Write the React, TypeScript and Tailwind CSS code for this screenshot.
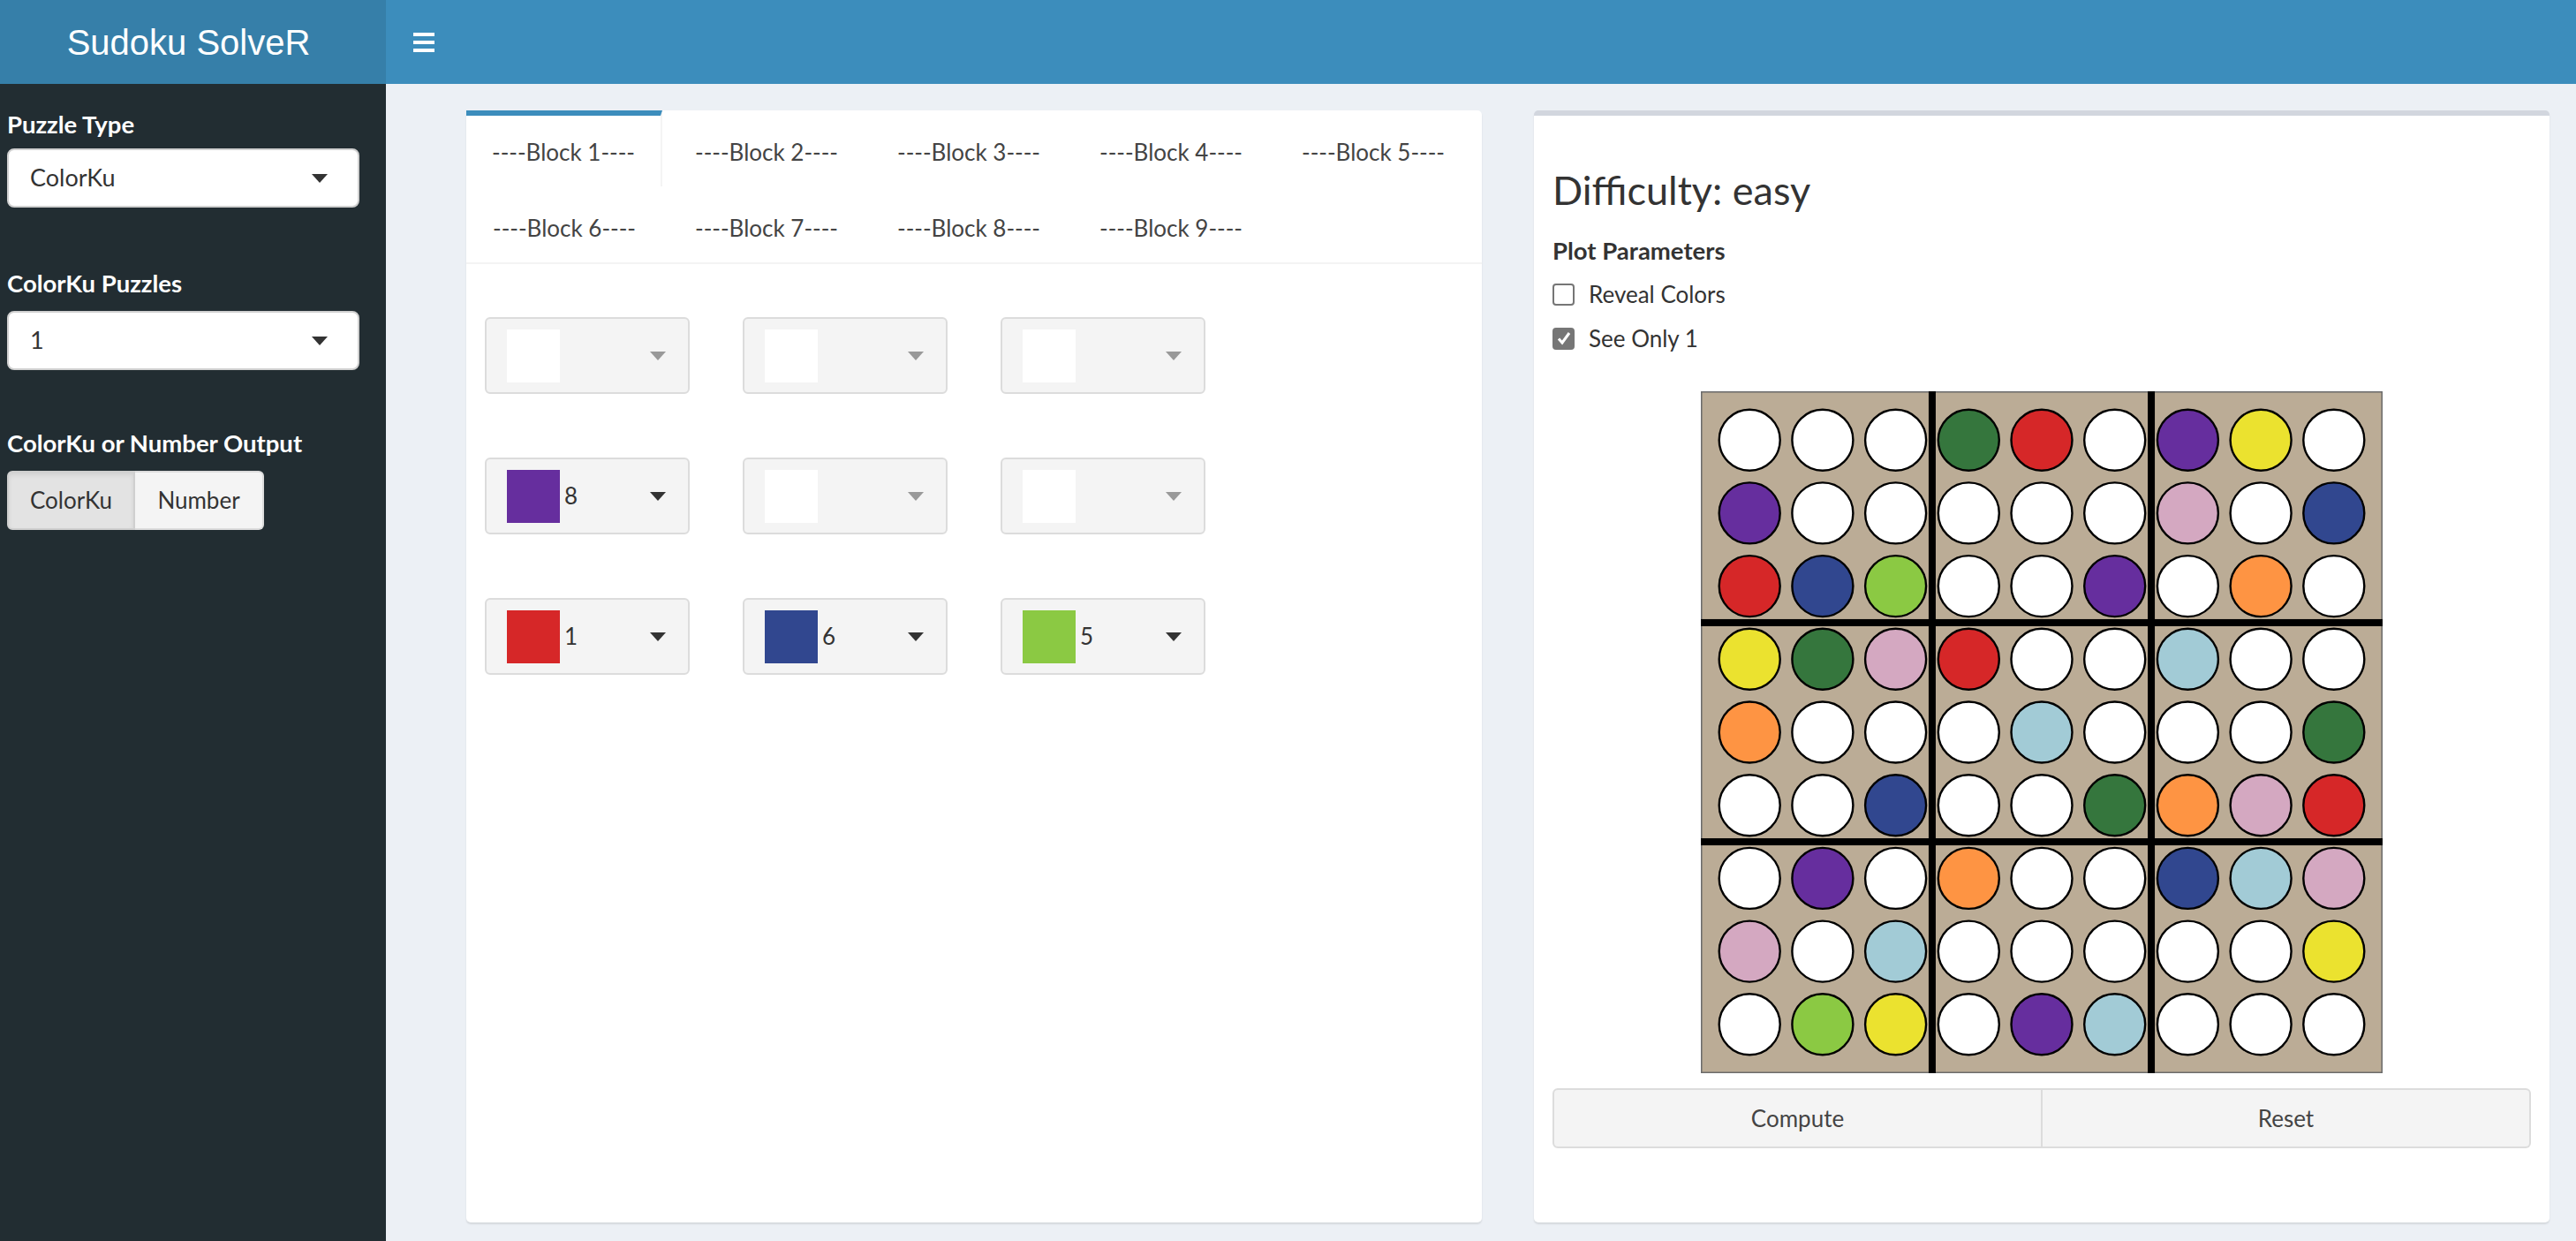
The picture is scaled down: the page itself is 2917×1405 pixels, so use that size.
import React from "react";

const COLORS: Record<string, string> = {
  W: "#ffffff",
  G: "#35763d",
  R: "#d62728",
  P: "#662e9e",
  Y: "#ebe22f",
  K: "#d4a8c1",
  N: "#31478f",
  L: "#8bc943",
  O: "#fe9443",
  B: "#a2cbd6",
};

const BOARD = [
  "WWWGRWPYW",
  "PWWWWWKWN",
  "RNLWWPWOW",
  "YGKRWWBWW",
  "OWWWBWWWG",
  "WWNWWGOKR",
  "WPWOWWNBK",
  "KWBWWWWWY",
  "WLYWPBWWW",
];

const BLOCK_CELLS: ({ c: string; n: number } | null)[][] = [
  [null, null, null],
  [{ c: "#662e9e", n: 8 }, null, null],
  [
    { c: "#d62728", n: 1 },
    { c: "#31478f", n: 6 },
    { c: "#8bc943", n: 5 },
  ],
];

const Caret = ({ color }: { color: string }) => (
  <svg width="18" height="10" viewBox="0 0 18 10">
    <polygon points="0,0 18,0 9,10" fill={color} />
  </svg>
);

const SidebarSelect = ({ value }: { value: string }) => (
  <div className="h-[67px] w-[399px] bg-white rounded-[8px] border-2 border-[#d0d0d0] flex items-center pl-[24px] pr-[34px]">
    <span className="text-[27px] text-[#333]">{value}</span>
    <span className="ml-auto flex">
      <Caret color="#333" />
    </span>
  </div>
);

const CellSelect = ({ cell }: { cell: { c: string; n: number } | null }) => (
  <div className="w-[232px] h-[87px] bg-[#f4f4f4] border-2 border-[#dcdcdc] rounded-[6px] flex items-center pl-[23px] pr-[25px]">
    <div
      className="w-[60px] h-[60px]"
      style={{ background: cell ? cell.c : "#ffffff" }}
    />
    <span className="ml-[5px] text-[26px] text-[#333]">{cell ? cell.n : ""}</span>
    <span className="ml-auto flex">
      <Caret color={cell ? "#333" : "#999"} />
    </span>
  </div>
);

const Board = () => {
  const step = 82.7;
  const off = 55.2;
  return (
    <svg width="772" height="772" viewBox="0 0 772 772">
      <rect x="0.75" y="0.75" width="770.5" height="770.5" fill="#bbac96" stroke="#6b6b6b" strokeWidth="1.5" />
      {[2.5, 5.5].map((k) => (
        <g key={k}>
          <rect x={off + k * step - 4} y="0" width="8" height="772" fill="#000" />
          <rect x="0" y={off + k * step - 4} width="772" height="8" fill="#000" />
        </g>
      ))}
      {BOARD.map((row, r) =>
        row.split("").map((ch, c) => (
          <circle
            key={`${r}-${c}`}
            cx={off + c * step}
            cy={off + r * step}
            r="34.5"
            fill={COLORS[ch]}
            stroke="#000"
            strokeWidth="2.4"
          />
        ))
      )}
    </svg>
  );
};

const Checkbox = ({ checked }: { checked?: boolean }) =>
  checked ? (
    <div className="w-[25px] h-[25px] rounded-[4px] bg-[#767676] flex items-center justify-center">
      <svg width="18" height="18" viewBox="0 0 18 18">
        <path d="M3 9.5 L7 14 L15 3" fill="none" stroke="#fff" strokeWidth="3" />
      </svg>
    </div>
  ) : (
    <div className="w-[25px] h-[25px] rounded-[4px] bg-white border-2 border-[#767676]" />
  );

export default function App() {
  const tabs = Array.from({ length: 9 }, (_, i) => `----Block ${i + 1}----`);

  return (
    <div className="min-h-screen w-full flex flex-col bg-[#ecf0f5] font-['Lato','Open_Sans',sans-serif] text-[#333]">
      {/* Header */}
      <header className="h-[95px] flex shrink-0">
        <div className="w-[437px] bg-[#367fa9] flex items-center justify-center pr-[10px]">
          <span className="text-white text-[40px] font-['Liberation_Sans',Arial,sans-serif]">
            Sudoku SolveR
          </span>
        </div>
        <div className="flex-1 bg-[#3c8dbc] flex items-center pl-[31px]">
          <div className="flex flex-col gap-[5px] w-[24px]">
            <div className="h-[4px] bg-white" />
            <div className="h-[4px] bg-white" />
            <div className="h-[4px] bg-white" />
          </div>
        </div>
      </header>

      <div className="flex flex-1">
        {/* Sidebar */}
        <aside className="w-[437px] shrink-0 bg-[#222d32] pl-[8px] pt-[29px]">
          <div className="text-white font-bold text-[27.5px] leading-[34px]">Puzzle Type</div>
          <div className="mt-[10px]">
            <SidebarSelect value="ColorKu" />
          </div>
          <div className="text-white font-bold text-[27.5px] leading-[34px] mt-[69px]">ColorKu Puzzles</div>
          <div className="mt-[14px]">
            <SidebarSelect value="1" />
          </div>
          <div className="text-white font-bold text-[27.5px] leading-[34px] mt-[66px]">
            ColorKu or Number Output
          </div>
          <div className="mt-[14px] flex h-[67px] w-[291px]">
            <div className="w-[145px] bg-[#e3e3e3] border-2 border-[#cfcfcf] rounded-l-[6px] flex items-center justify-center text-[26px] text-[#333] shadow-[inset_0_3px_5px_rgba(0,0,0,0.08)]">
              ColorKu
            </div>
            <div className="flex-1 bg-[#f4f4f4] border-2 border-l-0 border-[#dcdcdc] rounded-r-[6px] flex items-center justify-center text-[26px] text-[#333]">
              Number
            </div>
          </div>
        </aside>

        {/* Main content */}
        <main className="flex-1 flex gap-[59px] pl-[91px] pt-[30px] pb-[21px]">
          {/* Left box: tabs */}
          <section className="w-[1150px] h-[1259px] bg-white rounded-[5px] shadow-[0_2px_2px_rgba(0,0,0,0.1)]">
            <div className="flex flex-wrap border-b-2 border-[#f4f4f4]">
              {tabs.map((t, i) => (
                <div
                  key={t}
                  className={
                    i === 0
                      ? "w-[222px] mr-[7px] h-[86px] border-t-[6px] border-[#3c8dbc] border-r-2 border-r-[#f4f4f4] flex items-center justify-center text-[26px] text-[#444] pt-[2px]"
                      : "w-[222px] mr-[7px] h-[86px] border-t-[6px] border-transparent flex items-center justify-center text-[26px] text-[#444] pt-[2px]"
                  }
                >
                  {t}
                </div>
              ))}
            </div>
            <div className="pl-[21px] pt-[60px] flex flex-col gap-[72px]">
              {BLOCK_CELLS.map((row, r) => (
                <div key={r} className="flex gap-[60px]">
                  {row.map((cell, c) => (
                    <CellSelect key={c} cell={cell} />
                  ))}
                </div>
              ))}
            </div>
          </section>

          {/* Right box: plot */}
          <section className="w-[1150px] h-[1259px] bg-white rounded-[5px] border-t-[6px] border-[#d2d6de] shadow-[0_2px_2px_rgba(0,0,0,0.1)] px-[21px]">
            <h3 className="text-[45px] leading-[50px] font-normal mt-[59px]">Difficulty: easy</h3>
            <div className="font-bold text-[27.5px] leading-[34px] mt-[27px]">Plot Parameters</div>
            <div className="flex items-center gap-[16px] mt-[15px] h-[34px]">
              <Checkbox />
              <span className="text-[26px]">Reveal Colors</span>
            </div>
            <div className="flex items-center gap-[16px] mt-[16px] h-[34px]">
              <Checkbox checked />
              <span className="text-[26px]">See Only 1</span>
            </div>
            <div className="flex justify-center mt-[43px]">
              <Board />
            </div>
            <div className="flex mt-[17px] h-[68px]">
              <div className="flex-1 bg-[#f4f4f4] border-2 border-[#dcdcdc] rounded-l-[6px] flex items-center justify-center text-[26px] text-[#444]">
                Compute
              </div>
              <div className="flex-1 bg-[#f4f4f4] border-2 border-l-0 border-[#dcdcdc] rounded-r-[6px] flex items-center justify-center text-[26px] text-[#444]">
                Reset
              </div>
            </div>
          </section>
        </main>
      </div>
    </div>
  );
}
